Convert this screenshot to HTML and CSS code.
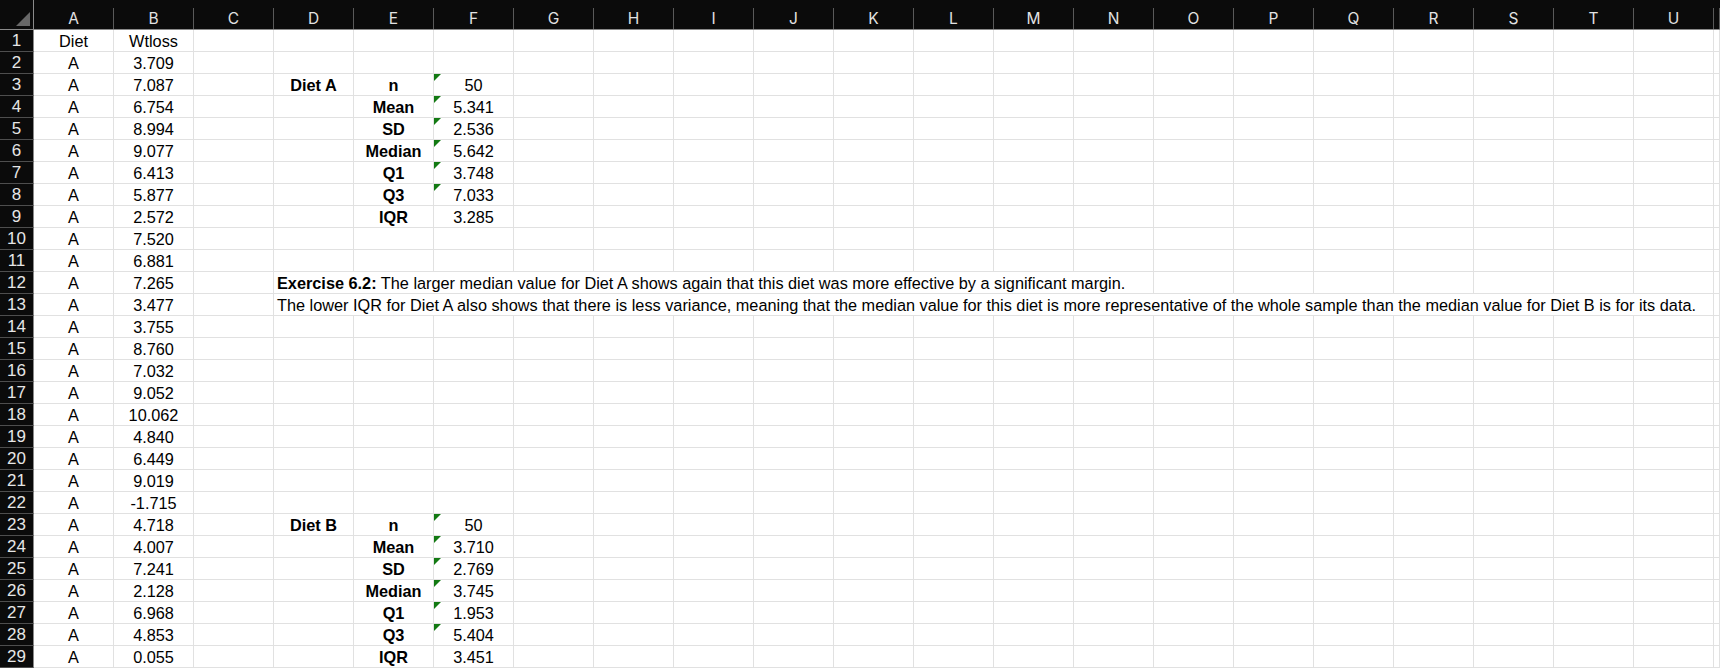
FILE: index.html
```html
<!DOCTYPE html>
<html lang="en">
<head>
    <meta charset="UTF-8">
    <title>Diet Wtloss</title>
    <link rel="stylesheet" href="styles.css">
</head>
<body>
    <div class="sheet" id="sheet"></div>

    <script>
        const cols = 'ABCDEFGHIJKLMNOPQRSTU'.split('');
        const wtloss = ['3.709', '7.087', '6.754', '8.994', '9.077', '6.413', '5.877', '2.572', '7.520', '6.881',
            '7.265', '3.477', '3.755', '8.760', '7.032', '9.052', '10.062', '4.840', '6.449', '9.019',
            '-1.715', '4.718', '4.007', '7.241', '2.128', '6.968', '4.853', '0.055'];
        const labels = ['n', 'Mean', 'SD', 'Median', 'Q1', 'Q3', 'IQR'];
        const statsA = ['50', '5.341', '2.536', '5.642', '3.748', '7.033', '3.285'];
        const statsB = ['50', '3.710', '2.769', '3.745', '1.953', '5.404', '3.451'];

        const sheet = document.getElementById('sheet');

        function add(cls, html, span) {
            const el = document.createElement('div');
            el.className = cls;
            if (html) el.innerHTML = html;
            if (span) el.style.gridColumn = 'span ' + span;
            sheet.appendChild(el);
            return el;
        }

        // header row
        add('corner', '<span class="tri"></span>');
        cols.forEach(c => add('col-head', '<span>' + c + '</span>'));
        add('col-head', '<span></span>');

        for (let r = 1; r <= 29; r++) {
            add('row-head', r);
            const row = {};

            if (r === 1) {
                row.A = 'Diet';
                row.B = 'Wtloss';
            } else {
                row.A = 'A';
                row.B = wtloss[r - 2];
            }

            let stats = null, first = 0;
            if (r >= 3 && r <= 9) { stats = statsA; first = 3; }
            if (r >= 23 && r <= 29) { stats = statsB; first = 23; }
            if (stats) {
                const i = r - first;
                if (i === 0) row.D = '<b>' + (first === 3 ? 'Diet A' : 'Diet B') + '</b>';
                row.E = '<b>' + labels[i] + '</b>';
                row.F = stats[i];
                row.flag = i < 6;
            }

            for (let c = 0; c < cols.length; c++) {
                const key = cols[c];
                if (key === 'D' && r === 12) {
                    add('cell text', '<b>Exercise 6.2:</b> The larger median value for Diet A shows again that this diet was more effective by a significant margin.', 11);
                    c += 10;
                    continue;
                }
                if (key === 'D' && r === 13) {
                    add('cell text', 'The lower IQR for Diet A also shows that there is less variance, meaning that the median value for this diet is more representative of the whole sample than the median value for Diet B is for its data.', 18);
                    c += 17;
                    continue;
                }
                const cell = add('cell', row[key]);
                if (key === 'F' && row.flag) cell.classList.add('flag');
            }
            add('cell', '');
        }
    </script>
</body>
</html>
```
FILE: styles.css
```css
body {
    margin: 0;
    padding: 0;
    background-color: #fff;
    font-family: "Liberation Sans", Arial, sans-serif;
    overflow: hidden;
}

.sheet {
    display: grid;
    grid-template-columns: 34px repeat(21, 80px) 1fr;
    grid-template-rows: 30px;
    grid-auto-rows: 22px;
}

.corner,
.col-head {
    background-color: #0b0b0b;
    border-bottom: 1px solid #8a8a8a;
    box-sizing: border-box;
    padding-top: 8px;
}

.corner {
    position: relative;
    border-right: 1px solid #8a8a8a;
}

.corner .tri {
    position: absolute;
    right: 3px;
    bottom: 3px;
    width: 0;
    height: 0;
    border-left: 14px solid transparent;
    border-bottom: 14px solid #686868;
}

.col-head span {
    display: flex;
    align-items: center;
    justify-content: center;
    height: 21px;
    border-right: 1px solid #5a5a5a;
    box-sizing: border-box;
    color: #e2e2e2;
    font-family: Inter, "Noto Sans", sans-serif;
    font-size: 15.5px;
}

.row-head {
    background-color: #0b0b0b;
    color: #e6e6e6;
    border-right: 1px solid #8a8a8a;
    border-bottom: 1px solid #4e4e4e;
    box-sizing: border-box;
    text-align: center;
    font-size: 17px;
    line-height: 22px;
}

.cell {
    position: relative;
    border-right: 1px solid #e1e1e1;
    border-bottom: 1px solid #e1e1e1;
    box-sizing: border-box;
    color: #000;
    font-size: 16.3px;
    line-height: 22px;
    text-align: center;
    white-space: nowrap;
}

.cell.text {
    text-align: left;
    padding-left: 3px;
}

.cell.flag::before {
    content: "";
    position: absolute;
    left: 0;
    top: 0;
    width: 0;
    height: 0;
    border-top: 7px solid #137a13;
    border-right: 7px solid transparent;
}
```
